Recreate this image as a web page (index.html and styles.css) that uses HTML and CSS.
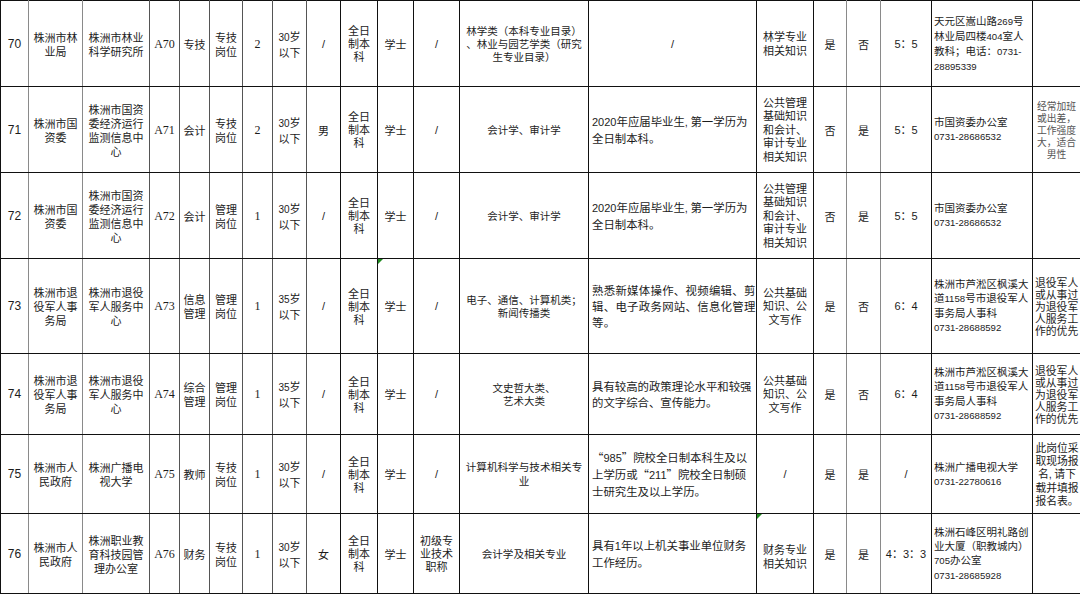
FILE: index.html
```html
<!DOCTYPE html>
<html lang="zh-CN">
<head>
<meta charset="utf-8">
<title>岗位表</title>
<link rel="stylesheet" href="styles.css">
</head>
<body>
<table class="sheet">
  <colgroup>
    <col style="width:28px"><col style="width:54px"><col style="width:67px"><col style="width:30px"><col style="width:30px">
    <col style="width:33px"><col style="width:30px"><col style="width:34px"><col style="width:34px"><col style="width:37px">
    <col style="width:36px"><col style="width:46px"><col style="width:129px"><col style="width:168px"><col style="width:57px">
    <col style="width:33px"><col style="width:34px"><col style="width:51px"><col style="width:101px"><col style="width:48px">
  </colgroup>
  <tbody>
    <tr class="r86">
      <td class="num">70</td>
      <td>株洲市林<br>业局</td>
      <td>株洲市林业<br>科学研究所</td>
      <td class="code">A70</td>
      <td>专技</td>
      <td>专技<br>岗位</td>
      <td class="code">2</td>
      <td><span class="d">30</span>岁<br>以下</td>
      <td class="slash">/</td>
      <td class="tight">全日<br>制本<br>科</td>
      <td>学士</td>
      <td class="slash">/</td>
      <td class="major">林学类（本科专业目录）<br>、林业与园艺学类（研究<br>生专业目录）</td>
      <td class="slash">/</td>
      <td class="exam">林学专业<br>相关知识</td>
      <td>是</td>
      <td>否</td>
      <td class="ratio">5：5</td>
      <td class="contact">天元区嵩山路<span class="d">269</span>号<br>林业局四楼<span class="d">404</span>室人<br>教科；电话：<span class="d">0731-</span><br><span class="d">28895339</span></td>
      <td></td>
    </tr>
    <tr class="r86">
      <td class="num">71</td>
      <td>株洲市国<br>资委</td>
      <td>株洲市国资<br>委经济运行<br>监测信息中<br>心</td>
      <td class="code">A71</td>
      <td>会计</td>
      <td>专技<br>岗位</td>
      <td class="code">2</td>
      <td><span class="d">30</span>岁<br>以下</td>
      <td>男</td>
      <td class="tight">全日<br>制本<br>科</td>
      <td>学士</td>
      <td class="slash">/</td>
      <td class="major">会计学、审计学</td>
      <td class="cond"><span class="d2">2020</span>年应届毕业生<span class="d2">,</span> 第一学历为<br>全日制本科。</td>
      <td class="exam">公共管理<br>基础知识<br>和会计、<br>审计专业<br>相关知识</td>
      <td>否</td>
      <td>是</td>
      <td class="ratio">5：5</td>
      <td class="contact">市国资委办公室<br><span class="d">0731-28686532</span></td>
      <td class="note-sm">经常加班<br>或出差，<br>工作强度<br>大，适合<br>男性</td>
    </tr>
    <tr class="r86">
      <td class="num">72</td>
      <td>株洲市国<br>资委</td>
      <td>株洲市国资<br>委经济运行<br>监测信息中<br>心</td>
      <td class="code">A72</td>
      <td>会计</td>
      <td>管理<br>岗位</td>
      <td class="code">1</td>
      <td><span class="d">30</span>岁<br>以下</td>
      <td class="slash">/</td>
      <td class="tight">全日<br>制本<br>科</td>
      <td>学士</td>
      <td class="slash">/</td>
      <td class="major">会计学、审计学</td>
      <td class="cond"><span class="d2">2020</span>年应届毕业生<span class="d2">,</span> 第一学历为<br>全日制本科。</td>
      <td class="exam">公共管理<br>基础知识<br>和会计、<br>审计专业<br>相关知识</td>
      <td>否</td>
      <td>是</td>
      <td class="ratio">5：5</td>
      <td class="contact">市国资委办公室<br><span class="d">0731-28686532</span></td>
      <td></td>
    </tr>
    <tr class="r95">
      <td class="num">73</td>
      <td>株洲市退<br>役军人事<br>务局</td>
      <td>株洲市退役<br>军人服务中<br>心</td>
      <td class="code">A73</td>
      <td>信息<br>管理</td>
      <td>管理<br>岗位</td>
      <td class="code">1</td>
      <td><span class="d">35</span>岁<br>以下</td>
      <td class="slash">/</td>
      <td class="tight">全日<br>制本<br>科</td>
      <td class="flag">学士</td>
      <td class="slash">/</td>
      <td class="major">电子、通信、计算机类；<br>新闻传播类</td>
      <td class="cond spaced">熟悉新媒体操作、视频编辑、剪<br>辑、电子政务网站、信息化管理<br>等。</td>
      <td class="exam">公共基础<br>知识、公<br>文写作</td>
      <td>是</td>
      <td>否</td>
      <td class="ratio">6：4</td>
      <td class="contact">株洲市芦淞区枫溪大<br>道<span class="d">1158</span>号市退役军人<br>事务局人事科<br><span class="d">0731-28688592</span></td>
      <td class="note">退役军人<br>或从事过<br>为退役军<br>人服务工<br>作的优先</td>
    </tr>
    <tr class="r81">
      <td class="num">74</td>
      <td>株洲市退<br>役军人事<br>务局</td>
      <td>株洲市退役<br>军人服务中<br>心</td>
      <td class="code">A74</td>
      <td>综合<br>管理</td>
      <td>管理<br>岗位</td>
      <td class="code">1</td>
      <td><span class="d">35</span>岁<br>以下</td>
      <td class="slash">/</td>
      <td class="tight">全日<br>制本<br>科</td>
      <td>学士</td>
      <td class="slash">/</td>
      <td class="major">文史哲大类、<br>艺术大类</td>
      <td class="cond">具有较高的政策理论水平和较强<br>的文字综合、宣传能力。</td>
      <td class="exam">公共基础<br>知识、公<br>文写作</td>
      <td>是</td>
      <td>否</td>
      <td class="ratio">6：4</td>
      <td class="contact">株洲市芦淞区枫溪大<br>道<span class="d">1158</span>号市退役军人<br>事务局人事科<br><span class="d">0731-28688592</span></td>
      <td class="note">退役军人<br>或从事过<br>为退役军<br>人服务工<br>作的优先</td>
    </tr>
    <tr class="r79">
      <td class="num">75</td>
      <td>株洲市人<br>民政府</td>
      <td>株洲广播电<br>视大学</td>
      <td class="code">A75</td>
      <td>教师</td>
      <td>专技<br>岗位</td>
      <td class="code">1</td>
      <td><span class="d">30</span>岁<br>以下</td>
      <td class="slash">/</td>
      <td class="tight">全日<br>制本<br>科</td>
      <td>学士</td>
      <td class="slash">/</td>
      <td class="major big">计算机科学与技术相关专<br>业</td>
      <td class="cond">“<span class="d2">985</span>”院校全日制本科生及以<br>上学历或“<span class="d2">211</span>”院校全日制硕<br>士研究生及以上学历。</td>
      <td class="slash">/</td>
      <td>是</td>
      <td>是</td>
      <td class="slash">/</td>
      <td class="contact">株洲广播电视大学<br><span class="d">0731-22780616</span></td>
      <td class="note c">此岗位采<br>取现场报<br>名<span class="d2">,</span> 请下<br>载并填报<br>报名表。</td>
    </tr>
    <tr class="r80">
      <td class="num">76</td>
      <td>株洲市人<br>民政府</td>
      <td>株洲职业教<br>育科技园管<br>理办公室</td>
      <td class="code">A76</td>
      <td>财务</td>
      <td>专技<br>岗位</td>
      <td class="code">1</td>
      <td><span class="d">30</span>岁<br>以下</td>
      <td>女</td>
      <td class="tight">全日<br>制本<br>科</td>
      <td>学士</td>
      <td class="tight">初级专<br>业技术<br>职称</td>
      <td class="major big">会计学及相关专业</td>
      <td class="cond">具有<span class="d2">1</span>年以上机关事业单位财务<br>工作经历。</td>
      <td class="exam flag low">财务专业<br>相关知识</td>
      <td>是</td>
      <td>是</td>
      <td class="ratio">4：3：3</td>
      <td class="contact">株洲石峰区明礼路创<br>业大厦（职教城内）<br><span class="d">705</span>办公室<br><span class="d">0731-28685928</span></td>
      <td></td>
    </tr>
  </tbody>
</table>
</body>
</html>
```

FILE: styles.css
```css
html, body {
  margin: 0;
  padding: 0;
  background: #ffffff;
  overflow: hidden;
}

.sheet {
  border-collapse: collapse;
  table-layout: fixed;
  width: 1081px;
  font-family: "Noto Sans CJK SC", "Liberation Sans", sans-serif;
  font-size: 11px;
  line-height: 14px;
  color: #1c1c1c;
}

.sheet td {
  border: 1px solid #111111;
  padding: 0 1px;
  text-align: center;
  vertical-align: middle;
  overflow: hidden;
  white-space: nowrap;
}

.sheet td:nth-child(1),
.sheet td:nth-child(2),
.sheet td:nth-child(16),
.sheet td:nth-child(17) {
  border-right-color: #8a8a8a;
}

.sheet td:nth-child(3),
.sheet td:nth-child(4),
.sheet td:nth-child(5),
.sheet td:nth-child(6),
.sheet td:nth-child(7),
.sheet td:nth-child(8) {
  border-right-color: #555555;
}

.r86 { height: 86px; }
.r95 { height: 95px; }
.r81 { height: 81px; }
.r79 { height: 79px; }
.r80 { height: 80px; }

.sheet td.num {
  font-family: "Liberation Sans", sans-serif;
  font-size: 12px;
}

.sheet td.code {
  font-family: "Liberation Serif", serif;
  font-size: 12px;
}

.d {
  font-family: "Liberation Sans", sans-serif;
  font-size: 10px;
}

.d2 {
  font-family: "Liberation Sans", sans-serif;
  font-size: 11px;
}

.sheet td.slash {
  font-family: "Liberation Sans", sans-serif;
  font-size: 11px;
}

.sheet td.tight {
  line-height: 13px;
}

.sheet td.major {
  font-size: 10.5px;
  line-height: 13px;
}

.sheet td.major.big {
  font-size: 10.6px;
  line-height: 14px;
}

.sheet td.cond {
  text-align: left;
  padding-left: 3px;
  font-size: 11.4px;
  line-height: 16px;
}

.sheet td.cond.spaced {
  letter-spacing: 0.3px;
}

.sheet td.exam {
  line-height: 13.5px;
}

.sheet td.low {
  padding-top: 6px;
}

.sheet td.ratio {
  font-family: "Liberation Sans", "Noto Sans CJK SC", sans-serif;
}

.sheet td.contact {
  text-align: left;
  padding-left: 2px;
  font-size: 10.5px;
  line-height: 14px;
}

.sheet td.contact .d {
  font-size: 9.6px;
}

.sheet td.note {
  text-align: left;
  padding-left: 2px;
  font-size: 10.8px;
  line-height: 12px;
}

.sheet td.note.c {
  text-align: center;
  line-height: 13px;
}

.sheet td.note-sm {
  font-size: 9.8px;
  line-height: 12px;
  color: #555555;
}

.sheet td.flag {
  position: relative;
}

.sheet td.flag::before {
  content: "";
  position: absolute;
  top: 0;
  left: 0;
  border-top: 5px solid #1f8a1f;
  border-right: 5px solid transparent;
}
```
